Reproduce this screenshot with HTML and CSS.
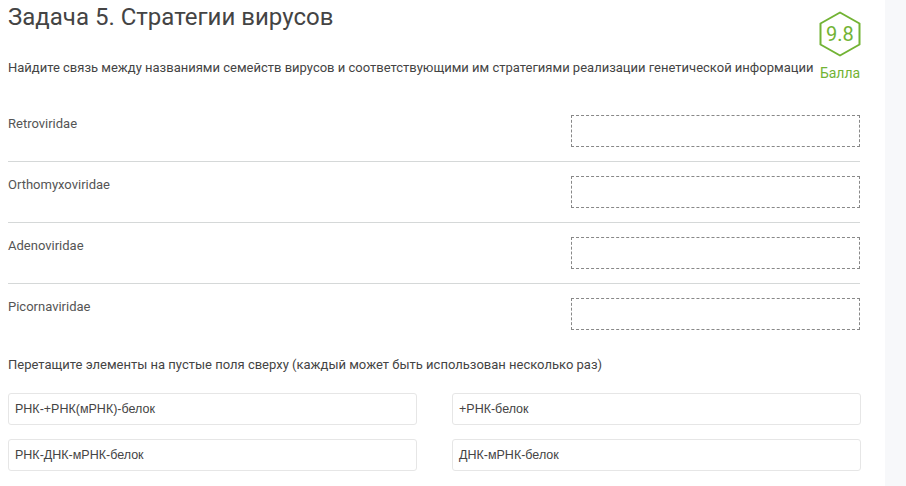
FILE: index.html
```html
<!DOCTYPE html>
<html lang="ru">
<head>
	<meta charset="UTF-8">
	<title>Задача 5</title>
	<link rel="stylesheet" href="styles.css">
</head>
<body>
	<div class="page">
		<div class="task">
			<div class="head">
				<div class="head-text">
					<h1 class="title">Задача 5. Стратегии вирусов</h1>
					<p class="desc">Найдите связь между названиями семейств вирусов и соответствующими им стратегиями реализации генетической информации</p>
				</div>
				<div class="score">
					<div class="hex">
						<svg width="44" height="46" viewBox="0 0 44 46">
							<polygon points="22,1.5 41.5,12.5 41.5,33.5 22,44.5 2.5,33.5 2.5,12.5" fill="none" stroke="#72b334" stroke-width="2" stroke-linejoin="round"/>
						</svg>
						<span class="hex-num">9.8</span>
					</div>
					<div class="score-label">Балла</div>
				</div>
			</div>
			<div class="rows">
				<div class="row">
					<div class="name">Retroviridae</div>
					<div class="drop"></div>
				</div>
				<div class="row">
					<div class="name">Orthomyxoviridae</div>
					<div class="drop"></div>
				</div>
				<div class="row">
					<div class="name">Adenoviridae</div>
					<div class="drop"></div>
				</div>
				<div class="row">
					<div class="name">Picornaviridae</div>
					<div class="drop"></div>
				</div>
			</div>
			<p class="hint">Перетащите элементы на пустые поля сверху (каждый может быть использован несколько раз)</p>
			<div class="items">
				<div class="item">РНК-+РНК(мРНК)-белок</div>
				<div class="item">+РНК-белок</div>
				<div class="item">РНК-ДНК-мРНК-белок</div>
				<div class="item">ДНК-мРНК-белок</div>
			</div>
		</div>
		<div class="side"></div>
	</div>
</body>
</html>
```

FILE: styles.css
```css
*{
	margin: 0;
	padding: 0;
	box-sizing: border-box;
}
body{
	font-family: Roboto, "Noto Sans", sans-serif;
	color: #444;
	background: #fff;
}
.page{
	display: flex;
	min-height: 486px;
}
.task{
	width: 885px;
	padding: 0 25px 0 8px;
}
.side{
	flex: 1;
	background: #f7f8fa;
}
.head{
	display: flex;
	justify-content: space-between;
}
.title{
	font-size: 24px;
	font-weight: 400;
	line-height: 28px;
	padding-top: 3px;
	color: #444;
}
.desc{
	font-size: 13px;
	line-height: 16px;
	margin-top: 29px;
	color: #444;
}
.score{
	display: flex;
	flex-direction: column;
	align-items: center;
	padding-top: 11px;
	margin-right: -2px;
}
.hex{
	position: relative;
	width: 44px;
	height: 46px;
}
.hex svg{
	display: block;
}
.hex-num{
	position: absolute;
	top: 0;
	left: 0;
	width: 44px;
	line-height: 46px;
	text-align: center;
	font-size: 20px;
	color: #72b334;
}
.score-label{
	font-size: 14px;
	line-height: 16px;
	margin-top: 8px;
	color: #72b334;
}
.rows{
	margin-top: 20px;
}
.row{
	display: flex;
	justify-content: space-between;
	padding: 14px 0;
	border-bottom: 1px solid #d5d8d8;
}
.row:last-child{
	border-bottom: none;
}
.name{
	font-size: 13px;
	line-height: 16px;
	padding-top: 1px;
	color: #555;
}
.drop{
	width: 289px;
	height: 32px;
	border: 1px dashed #888;
}
.hint{
	font-size: 13px;
	line-height: 16px;
	margin-top: 13px;
	color: #444;
}
.items{
	display: grid;
	grid-template-columns: 409px 409px;
	column-gap: 35px;
	row-gap: 14px;
	margin-top: 20px;
}
.item{
	height: 32px;
	padding: 0 6px;
	border: 1px solid #e6e6e6;
	border-radius: 3px;
	font-family: "Liberation Sans", Arial, sans-serif;
	font-size: 12.5px;
	line-height: 30px;
	color: #444;
}
```
